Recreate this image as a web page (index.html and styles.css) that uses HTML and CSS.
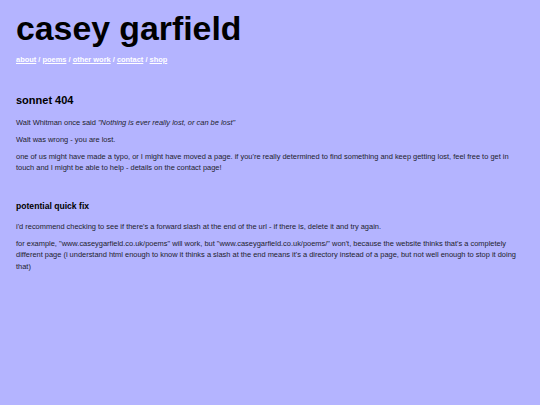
FILE: index.html
```html
<!DOCTYPE html>
<html lang="en">
<head>
<meta charset="utf-8">
<title>casey garfield - sonnet 404</title>
<link rel="stylesheet" href="styles.css">
</head>
<body>
<header class="site-header">
  <h1 class="site-title">casey garfield</h1>
  <nav class="site-nav"><a href="#">about</a> / <a href="#">poems</a> / <a href="#">other work</a> / <a href="#">contact</a> / <a href="#">shop</a></nav>
</header>
<main class="content">
  <section class="block">
    <h2 class="block-title">sonnet 404</h2>
    <p class="text">Walt Whitman once said <em>"Nothing is ever really lost, or can be lost"</em></p>
    <p class="text">Walt was wrong - you are lost.</p>
    <p class="text">one of us might have made a typo, or I might have moved a page. if you're really determined to find something and keep getting lost, feel free to get in touch and I might be able to help - details on the contact page!</p>
  </section>
  <section class="block">
    <h3 class="block-subtitle">potential quick fix</h3>
    <p class="text">i'd recommend checking to see if there's a forward slash at the end of the url - if there is, delete it and try again.</p>
    <p class="text">for example, "www.caseygarfield.co.uk/poems" will work, but "www.caseygarfield.co.uk/poems/" won't, because the website thinks that's a completely different page (i understand html enough to know it thinks a slash at the end means it's a directory instead of a page, but not well enough to stop it doing that)</p>
  </section>
</main>
</body>
</html>
```
FILE: styles.css
```css
html, body {
  background: #b4b4ff;
}
body {
  margin: 0;
  padding: 0 16px;
  font-family: "Liberation Sans", Arial, sans-serif;
  color: #1e1e2e;
}
.site-title {
  margin: 9px 0 0;
  font-size: 33.8px;
  line-height: 38px;
  font-weight: bold;
  color: #000;
}
.site-nav {
  margin-top: 6.6px;
  font-size: 7.45px;
  line-height: 11.6px;
  font-weight: bold;
  color: #fff;
}
.site-nav a {
  color: #fff;
  text-decoration: underline;
}
.block-title {
  margin: 28.8px 0 9.7px;
  font-size: 11px;
  line-height: 13px;
  font-weight: bold;
  color: #000;
}
.block-subtitle {
  margin: 27.4px 0 9.4px;
  font-size: 8.6px;
  line-height: 10px;
  font-weight: bold;
  color: #000;
}
.text {
  margin: 5.4px 0;
  font-size: 7.45px;
  line-height: 11.6px;
}
```
